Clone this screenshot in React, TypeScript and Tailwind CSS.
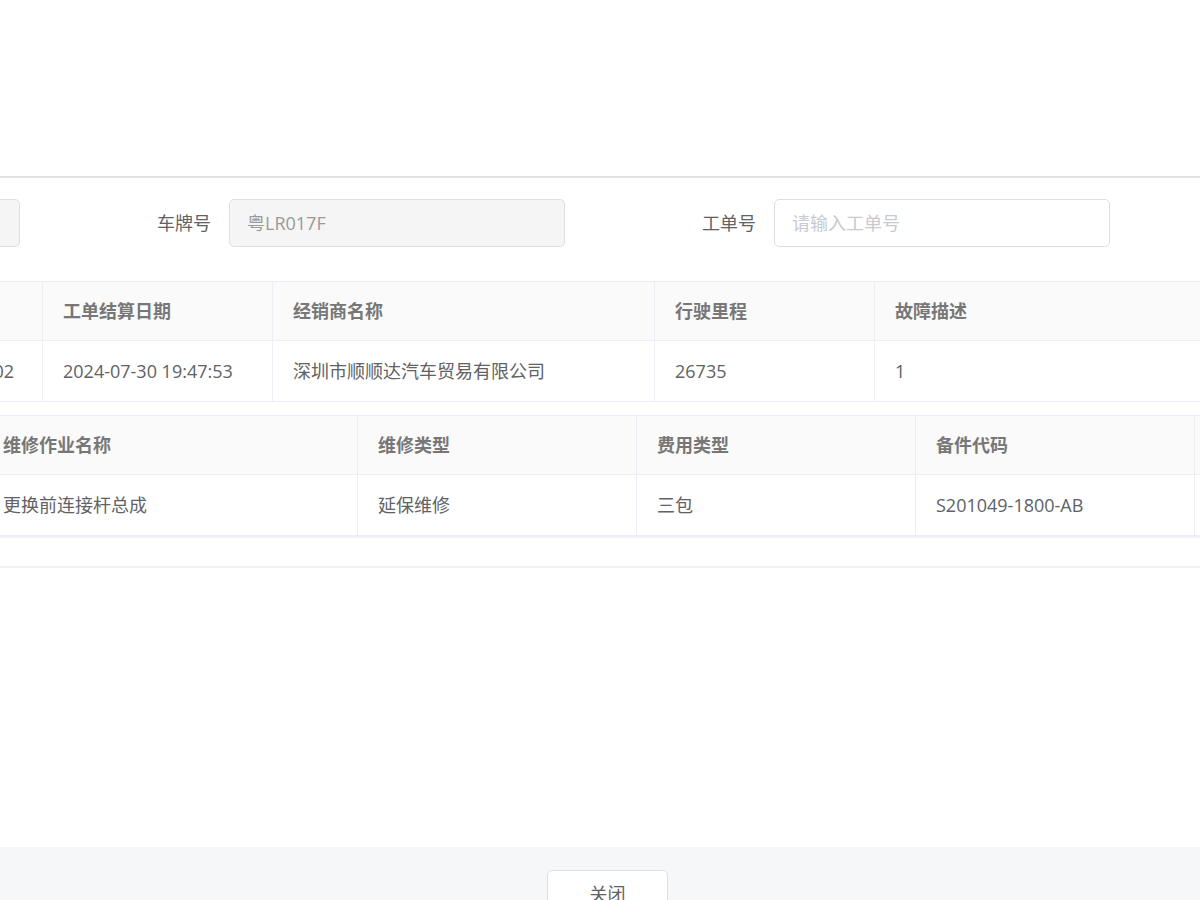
const font = "font-['Open_Sans','Noto_Sans_CJK_SC',sans-serif]"

function Field({ label, value, placeholder, disabled }: { label: string; value?: string; placeholder?: string; disabled?: boolean }) {
  return (
    <div className="flex shrink-0 items-center mr-[19px]">
      <label className="w-[190px] shrink-0 pr-[18px] text-right text-[18px] text-[#606266]">{label}</label>
      <div
        className={
          'flex h-[48px] w-[336px] shrink-0 items-center rounded-[5px] border px-[17px] text-[18px] ' +
          (disabled ? 'border-[#dcdfe6] bg-[#f5f5f5] text-[#999]' : 'border-[#dcdfe6] bg-white text-[#606266]')
        }
      >
        {value ? <span>{value}</span> : <span className="text-[#c8cad0]">{placeholder}</span>}
      </div>
    </div>
  )
}

type Col = { title: string; value: string; width: number; right?: boolean }

function Table({ cols, offset }: { cols: Col[]; offset: number }) {
  return (
    <div className="overflow-hidden border-t border-[#ebeef5]">
      <div className="flex bg-[#fafafa]" style={{ marginLeft: -offset }}>
        {cols.map((c, i) => (
          <div
            key={i}
            className="flex h-[59px] shrink-0 items-center border-r border-b border-[#ebeef5] px-[20px] text-[18px] font-bold text-[#777]"
            style={{ width: c.width }}
          >
            {c.title}
          </div>
        ))}
      </div>
      <div className="flex bg-white" style={{ marginLeft: -offset }}>
        {cols.map((c, i) => (
          <div
            key={i}
            className={
              'flex h-[61px] shrink-0 items-center border-r border-b border-[#ebeef5] px-[20px] text-[18px] text-[#606266] ' +
              (c.right ? 'justify-end pr-[28px]' : '')
            }
            style={{ width: c.width }}
          >
            <span className="whitespace-nowrap">{c.value}</span>
          </div>
        ))}
      </div>
    </div>
  )
}

export default function App() {
  const first: Col[] = [
    { title: '工单号', value: 'WO2024073000002', width: 243, right: true },
    { title: '工单结算日期', value: '2024-07-30 19:47:53', width: 230 },
    { title: '经销商名称', value: '深圳市顺顺达汽车贸易有限公司', width: 382 },
    { title: '行驶里程', value: '26735', width: 220 },
    { title: '故障描述', value: '1', width: 400 },
  ]
  const second: Col[] = [
    { title: '维修作业名称', value: '更换前连接杆总成', width: 375 },
    { title: '维修类型', value: '延保维修', width: 279 },
    { title: '费用类型', value: '三包', width: 279 },
    { title: '备件代码', value: 'S201049-1800-AB', width: 279 },
    { title: '备件名称', value: '', width: 300 },
  ]

  return (
    <div className={`h-[900px] w-[1200px] overflow-hidden bg-white ${font}`}>
      <div className="h-[176px]" />
      <div className="h-[2px] bg-[#e2e2e2]" />

      <div className="overflow-hidden pt-[21px]">
        <div className="ml-[-506px] flex">
          <Field label="VIN码" value="LVVDB21B8ND000000" disabled />
          <Field label="车牌号" value="粤LR017F" disabled />
          <Field label="工单号" placeholder="请输入工单号" />
        </div>
      </div>

      <div className="mt-[34px]">
        <Table cols={first} offset={200} />
      </div>

      <div className="mt-[13px]">
        <Table cols={second} offset={17} />
      </div>
      <div className="h-[2px] bg-[#eef1f5]" />
      <div className="h-[28px]" />
      <div className="h-[2px] bg-[#eff2f5]" />

      <div className="h-[279px]" />

      <div className="flex h-[53px] justify-center bg-[#f6f7f8] pt-[23px] pl-[15px]">
        <button
          type="button"
          className="h-[48px] w-[121px] rounded-[5px] border border-[#dcdfe6] bg-white text-[18px] text-[#606266]"
        >
          关闭
        </button>
      </div>
    </div>
  )
}
